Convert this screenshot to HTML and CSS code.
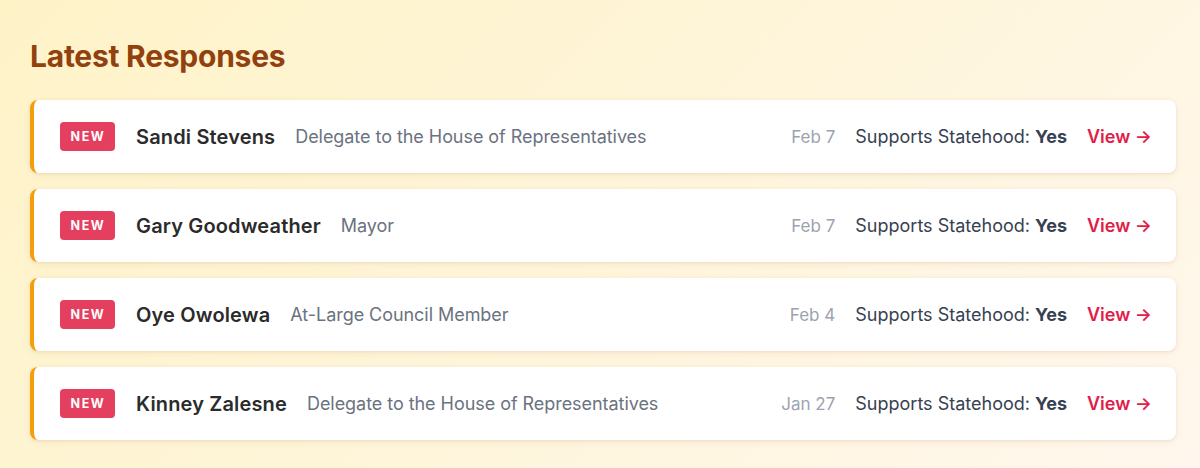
FILE: index.html
```html
<!DOCTYPE html>
<html lang="en">
<head>
<meta charset="utf-8">
<title>Latest Responses</title>
<link rel="stylesheet" href="styles.css">
</head>
<body>
<main class="page">
  <h2 class="title">Latest Responses</h2>
  <ul class="list">
    <li class="card">
      <span class="badge">NEW</span>
      <span class="name">Sandi Stevens</span>
      <span class="role">Delegate to the House of Representatives</span>
      <span class="date">Feb 7</span>
      <span class="stance">Supports Statehood: <b>Yes</b></span>
      <a class="view" href="#">View →</a>
    </li>
    <li class="card">
      <span class="badge">NEW</span>
      <span class="name">Gary Goodweather</span>
      <span class="role">Mayor</span>
      <span class="date">Feb 7</span>
      <span class="stance">Supports Statehood: <b>Yes</b></span>
      <a class="view" href="#">View →</a>
    </li>
    <li class="card">
      <span class="badge">NEW</span>
      <span class="name">Oye Owolewa</span>
      <span class="role">At-Large Council Member</span>
      <span class="date">Feb 4</span>
      <span class="stance">Supports Statehood: <b>Yes</b></span>
      <a class="view" href="#">View →</a>
    </li>
    <li class="card">
      <span class="badge">NEW</span>
      <span class="name">Kinney Zalesne</span>
      <span class="role">Delegate to the House of Representatives</span>
      <span class="date">Jan 27</span>
      <span class="stance">Supports Statehood: <b>Yes</b></span>
      <a class="view" href="#">View →</a>
    </li>
  </ul>
</main>
</body>
</html>
```
FILE: styles.css
```css
* { box-sizing: border-box; }
html, body { margin: 0; height: 100%; }
body {
  font-family: Inter, "Noto Sans", sans-serif;
  background: linear-gradient(135deg, #fef3c7 0%, #fff7ed 100%);
  -webkit-font-smoothing: antialiased;
}
.page {
  padding: 38px 24px 0 30px;
}
.title {
  margin: 0 0 26px;
  font-size: 30px;
  line-height: 36px;
  font-weight: 700;
  color: #92400e;
  letter-spacing: -0.25px;
}
.list {
  list-style: none;
  margin: 0;
  padding: 0;
  display: flex;
  flex-direction: column;
  gap: 16px;
}
.card {
  display: flex;
  align-items: center;
  gap: 20px;
  height: 73px;
  padding: 0 24px 0 26px;
  background: #fff;
  border-left: 4px solid #f59e0b;
  border-radius: 8px;
  box-shadow: 0 1px 3px rgba(146, 64, 14, 0.10), 0 2px 8px rgba(146, 64, 14, 0.06);
}
.badge {
  display: inline-flex;
  align-items: center;
  justify-content: center;
  width: 55px;
  height: 29px;
  padding-left: 1px;
  border-radius: 4px;
  background: #e43f5e;
  color: #fff;
  font-size: 12.5px;
  font-weight: 700;
  letter-spacing: 1.6px;
}
.name {
  margin-left: 1px;
  font-size: 20px;
  font-weight: 600;
  color: #2b2b2b;
  letter-spacing: 0.15px;
}
.role {
  font-size: 18px;
  color: #6b7280;
  flex: 1;
  letter-spacing: -0.05px;
}
.date {
  font-size: 17px;
  color: #9ca3af;
}
.stance {
  font-size: 18px;
  color: #374151;
}
.stance b { font-weight: 700; }
.view {
  font-size: 18px;
  font-weight: 600;
  color: #e11d48;
  text-decoration: none;
}
```
